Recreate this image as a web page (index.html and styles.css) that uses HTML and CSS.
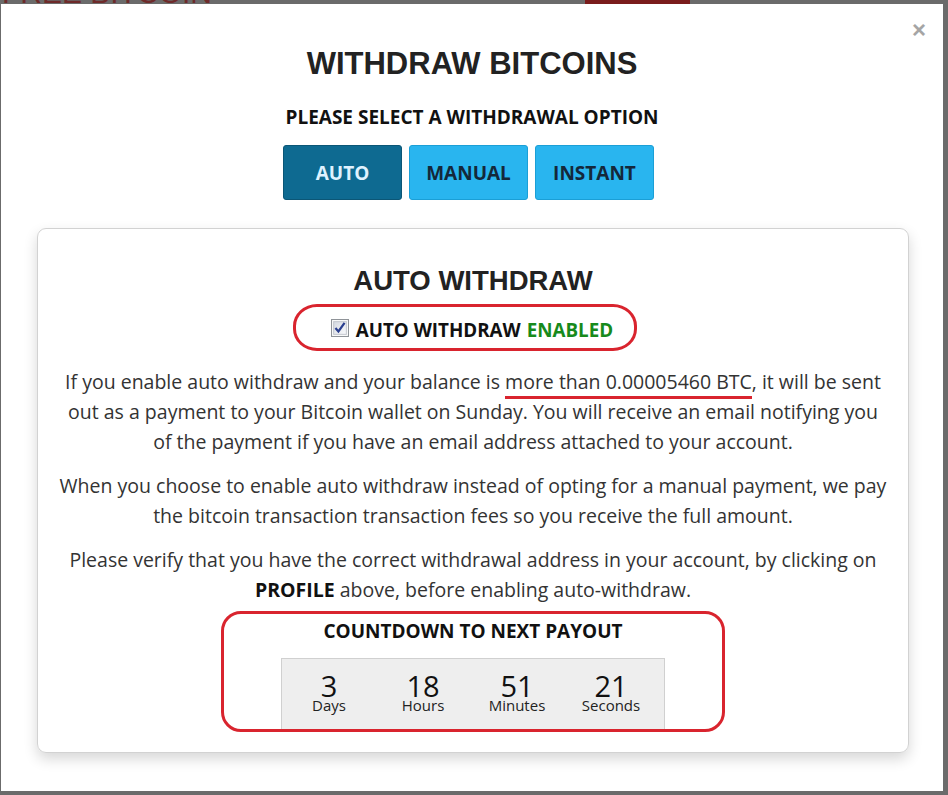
FILE: index.html
```html
<!DOCTYPE html>
<html lang="en">
<head>
    <meta charset="UTF-8">
    <meta name="viewport" content="width=device-width,initial-scale=1">
    <title>Withdraw Bitcoins</title>
    <link rel="stylesheet" href="styles.css">
</head>
<body>
    <div class="page-behind">
        <span class="behind-logo">FREE BITCOIN</span>
        <span class="behind-button"></span>
    </div>

    <div class="modal">
        <a class="modal-close" href="#">&times;</a>
        <h1 class="modal-title">WITHDRAW BITCOINS</h1>
        <h3 class="option-label">PLEASE SELECT A WITHDRAWAL OPTION</h3>
        <div class="option-buttons">
            <button class="option-btn active">AUTO</button>
            <button class="option-btn">MANUAL</button>
            <button class="option-btn">INSTANT</button>
        </div>

        <div class="panel">
            <h2 class="panel-title">AUTO WITHDRAW</h2>
            <div class="toggle-row">
                <label class="toggle marked">
                    <span class="checkbox">
                        <svg width="18" height="18" viewBox="0 0 17 17">
                            <defs>
                                <linearGradient id="cbg" x1="0" y1="0" x2="1" y2="1">
                                    <stop offset="0" stop-color="#d3d8e0"/>
                                    <stop offset="1" stop-color="#fafbfd"/>
                                </linearGradient>
                            </defs>
                            <rect x="0.5" y="0.5" width="16" height="16" fill="#fff" stroke="#8f9398"/>
                            <rect x="2.5" y="2.5" width="12" height="12" fill="url(#cbg)" stroke="#c4c8cf"/>
                            <path d="M4.2 8.6 L7 11.8 L12.8 3.6" fill="none" stroke="#2a3f8f" stroke-width="2.1"/>
                        </svg>
                    </span>
                    AUTO WITHDRAW <span class="enabled">ENABLED</span>
                </label>
            </div>

            <p>If you enable auto withdraw and your balance is <span class="underlined">more than 0.00005460 BTC</span>, it will be sent<br>
            out as a payment to your Bitcoin wallet on Sunday. You will receive an email notifying you<br>
            of the payment if you have an email address attached to your account.</p>
            <p>When you choose to enable auto withdraw instead of opting for a manual payment, we pay<br>
            the bitcoin transaction transaction fees so you receive the full amount.</p>
            <p>Please verify that you have the correct withdrawal address in your account, by clicking on<br>
            <b>PROFILE</b> above, before enabling auto-withdraw.</p>

            <div class="countdown-wrap marked">
                <div class="countdown-title">COUNTDOWN TO NEXT PAYOUT</div>
                <div class="countdown">
                    <div class="unit"><span class="num">3</span><span class="label">Days</span></div>
                    <div class="unit"><span class="num">18</span><span class="label">Hours</span></div>
                    <div class="unit"><span class="num">51</span><span class="label">Minutes</span></div>
                    <div class="unit"><span class="num">21</span><span class="label">Seconds</span></div>
                </div>
            </div>
        </div>
    </div>
</body>
</html>
```

FILE: styles.css
```css
html, body {
    margin: 0;
    padding: 0;
}
body {
    background-color: #6b6b6b;
    font-family: "Open Sans", Arial, sans-serif;
    color: #333;
    position: relative;
    overflow: hidden;
    height: 795px;
}
.page-behind {
    position: absolute;
    top: 0;
    left: 0;
    width: 100%;
    height: 4px;
    overflow: hidden;
}
.behind-logo {
    position: absolute;
    left: 2px;
    top: -24px;
    font-family: "Liberation Sans", Arial, sans-serif;
    font-size: 30px;
    color: #6e2a2a;
}
.behind-button {
    position: absolute;
    left: 585px;
    top: 0;
    width: 105px;
    height: 4px;
    background: #7a1c1c;
}
.modal {
    position: relative;
    background: #fff;
    margin: 4px 5px 0 1px;
    height: 787px;
    box-sizing: border-box;
    padding-top: 43px;
    text-align: center;
}
.modal-close {
    position: absolute;
    top: 12px;
    right: 17px;
    font-family: "Liberation Sans", Arial, sans-serif;
    font-size: 24px;
    font-weight: bold;
    color: #a5a5a5;
    text-decoration: none;
}
.modal-title {
    font-family: "Liberation Sans", Arial, sans-serif;
    font-size: 31px;
    line-height: 34px;
    font-weight: bold;
    color: #222;
    margin: 0;
}
.option-label {
    font-size: 19px;
    line-height: 24px;
    font-weight: bold;
    color: #111;
    margin: 24px 0 0;
}
.option-buttons {
    display: flex;
    justify-content: center;
    gap: 7px;
    margin-top: 16px;
    padding-right: 7px;
}
.option-btn {
    width: 119px;
    height: 55px;
    border: 1px solid #1b9fd6;
    border-radius: 3px;
    background: #29b5ef;
    color: #14283a;
    font-family: "Open Sans", Arial, sans-serif;
    font-size: 19px;
    font-weight: bold;
    cursor: pointer;
}
.option-btn.active {
    background: #0e6a91;
    border-color: #0b5676;
    color: #dff2ff;
}
.panel {
    margin: 28px 34px 0 36px;
    border: 1px solid #d2d2d2;
    border-radius: 9px;
    box-shadow: 0 6px 14px rgba(0,0,0,0.16);
    padding: 36px 8px 20px;
}
.panel-title {
    font-family: "Liberation Sans", Arial, sans-serif;
    font-size: 27.5px;
    line-height: 32px;
    font-weight: bold;
    color: #222;
    margin: 0;
}
.marked {
    border: 3px solid #d9242e;
}
.toggle-row {
    margin-top: 7px;
}
.toggle {
    display: inline-flex;
    align-items: center;
    gap: 7px;
    height: 36px;
    padding: 5px 21px 0 35px;
    margin-right: 16px;
    border-radius: 24px / 22px;
    font-size: 18.8px;
    font-weight: bold;
    color: #111;
}
.checkbox {
    display: inline-flex;
    margin-top: -4px;
}
.enabled {
    color: #178a1c;
    margin-left: -1px;
}
.panel p {
    font-size: 19.5px;
    line-height: 30px;
    margin: 14px 0 0;
}
.panel p:first-of-type {
    margin-top: 16px;
}
.panel p b {
    color: #111;
}
.underlined {
    border-bottom: 3px solid #d9242e;
    padding-bottom: 1px;
}
.countdown-wrap {
    width: 498px;
    margin: 6px auto 0;
    border-radius: 20px;
    padding-top: 5px;
}
.countdown-title {
    font-size: 19px;
    line-height: 24px;
    font-weight: bold;
    color: #111;
}
.countdown {
    display: flex;
    width: 382px;
    margin: 15px auto 0;
    padding: 16px 0 16px;
    background: #eee;
    border: 1px solid #d0d0d0;
    border-bottom: none;
}
.unit {
    width: 94px;
    display: flex;
    flex-direction: column;
}
.num {
    font-size: 29px;
    line-height: 22px;
    color: #111;
}
.label {
    font-size: 15px;
    line-height: 16px;
    color: #222;
}
```
